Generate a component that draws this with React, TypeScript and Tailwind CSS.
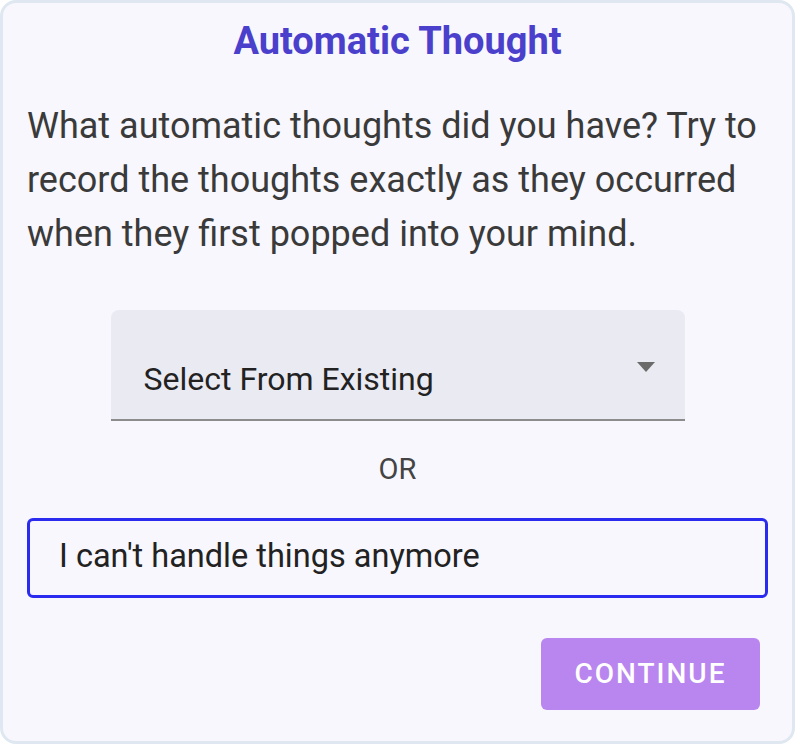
export default function App() {
  return (
    <div className="min-h-[744px] bg-white font-['Roboto',sans-serif]">
      <div className="flex h-[744px] w-[795px] flex-col rounded-[16px] border-[3px] border-[#dfe7f0] bg-[#f7f7fd] px-[24px] pt-[16px]">
        <h1 className="text-center text-[38px] font-bold leading-[44px] text-[#4a40cc]">
          Automatic Thought
        </h1>

        <p className="mt-[36px] text-[36px] leading-[54px] text-[#3a3a3a]">
          What automatic thoughts did you have? Try to record the thoughts exactly as they occurred when they first popped into your mind.
        </p>

        <div className="relative mx-auto mt-[49px] w-[574px] rounded-t-[8px] border-b-2 border-[#8c8c8c] bg-[#eaeaf3] pl-[33px] pt-[51px] pb-[22px]">
          <span className="block text-[32px] leading-[36px] text-[#222]">Select From Existing</span>
          <svg className="absolute right-[30px] top-[52px]" width="18" height="10" viewBox="0 0 18 10">
            <path d="M0 0h18L9 10z" fill="#6b6b6b" />
          </svg>
        </div>

        <div className="mt-[31px] text-center text-[29px] leading-[34px] text-[#444]">OR</div>

        <div className="mt-[32px] rounded-[6px] border-[3px] border-[#2b2bf0] pl-[29px] pt-[17px] pb-[21px]">
          <span className="block text-[32.5px] leading-[36px] text-[#222]">I can't handle things anymore</span>
        </div>

        <button className="mr-[8px] mt-[40px] flex h-[72px] w-[219px] items-center justify-center self-end rounded-[6px] bg-[#b985ef] text-[28px] font-medium tracking-[2px] text-white">
          CONTINUE
        </button>
      </div>
    </div>
  );
}
